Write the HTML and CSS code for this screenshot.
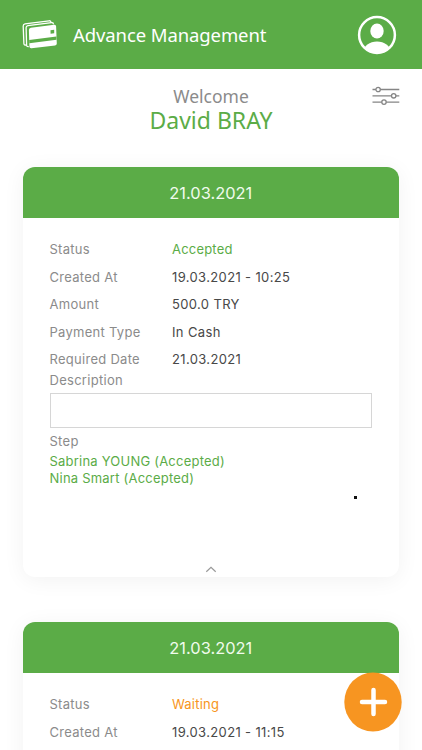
FILE: index.html
```html
<!DOCTYPE html>
<html lang="en">
<head>
<meta charset="utf-8">
<title>Advance Management</title>
<link rel="stylesheet" href="styles.css">
</head>
<body>
<div class="app">
  <header class="topbar">
    <svg class="cards-icon" width="36" height="30" viewBox="0 0 36 30">
      <g fill="none" stroke="#fff" stroke-width="1.3" stroke-linecap="round" stroke-linejoin="round">
        <path d="M3.8 25.200 2.900 25Q2 24.800 1.900 23.800L1.200 6.100Q1.100 4.200 3 3.900L27 .8Q28.700 .6 28.800 1.900"/>
        <path d="M6.200 26.700 5.500 26.500Q4.700 26.200 4.600 25.200L4.100 7.800Q4 6 5.900 5.700L29.500 2.700Q31.200 2.500 31.300 3.800"/>
      </g>
      <path fill="#fff" d="M8.900 7.700 32.200 4.700Q34 4.500 34.100 6.300L34.800 23.500Q34.900 25.200 33.100 25.400L9.500 28.200Q7.500 28.400 7.400 26.600L6.900 10Q6.900 8 8.900 7.700Z"/>
      <path fill="#5bac47" d="M7.200 19.900 34.500 16.500V19.800L7.300 23.200ZM28.500 10.200 32.200 9.700V13.300L28.600 13.700Z"/>
    </svg>
    <h1 class="title">Advance Management</h1>
    <svg class="avatar" width="40" height="40" viewBox="0 0 40 40">
      <defs><clipPath id="ring"><circle cx="20" cy="20" r="18"/></clipPath></defs>
      <g fill="#fff" clip-path="url(#ring)">
        <ellipse cx="20" cy="16" rx="6.700" ry="7.500"/>
        <ellipse cx="20" cy="36.500" rx="13.500" ry="10"/>
      </g>
      <circle cx="20" cy="20" r="17.900" fill="none" stroke="#fff" stroke-width="2.500"/>
    </svg>
  </header>

  <section class="welcome">
    <p class="greeting">Welcome</p>
    <p class="user">David BRAY</p>
    <svg class="filter" width="28" height="20" viewBox="0 0 28 20" fill="none" stroke="#858585" stroke-width="1.300">
      <path d="M.5 3.500H3.900M8.300 3.500H27.300M.5 9.800H19.500M23.900 9.800H27.300M.5 16.100H9.800M14.200 16.100H27.300"/>
      <circle cx="6.100" cy="3.500" r="2.200"/><circle cx="21.700" cy="9.800" r="2.200"/><circle cx="12" cy="16.100" r="2.200"/>
    </svg>
  </section>

  <main class="list">
    <article class="card">
      <h2 class="card-head">21.03.2021</h2>
      <div class="card-body">
        <dl class="rows">
          <dt>Status</dt><dd class="accepted">Accepted</dd>
          <dt>Created At</dt><dd>19.03.2021 - 10:25</dd>
          <dt>Amount</dt><dd>500.0 TRY</dd>
          <dt>Payment Type</dt><dd>In Cash</dd>
          <dt>Required Date</dt><dd>21.03.2021</dd>
        </dl>
        <p class="label">Description</p>
        <div class="description"></div>
        <p class="label step">Step</p>
        <p class="approver">Sabrina YOUNG (Accepted)</p>
        <p class="approver">Nina Smart (Accepted)</p>
        <div class="dot"></div>
        <svg class="chevron" width="12" height="7" viewBox="0 0 12 7"><path d="M1.300 5.700 6 1.300 10.700 5.700" fill="none" stroke="#999" stroke-width="1.200"/></svg>
      </div>
    </article>
    <article class="card">
      <h2 class="card-head">21.03.2021</h2>
      <div class="card-body">
        <dl class="rows">
          <dt>Status</dt><dd class="waiting">Waiting</dd>
          <dt>Created At</dt><dd>19.03.2021 - 11:15</dd>
        </dl>
      </div>
    </article>
  </main>

  <button class="fab" aria-label="Add">
    <svg width="58" height="60" viewBox="0 0 58 60"><ellipse cx="29" cy="30" rx="28.700" ry="29.600" fill="#f79521"/><path d="M18 30H41M29.500 18V42" stroke="#fff" stroke-width="4.500" stroke-linecap="round"/></svg>
  </button>
</div>
</body>
</html>
```
FILE: styles.css
```css
* { box-sizing: border-box; margin: 0; padding: 0; }
html, body { height: 100%; overflow: hidden; }
body { background: #fff; font-family: Inter, "Liberation Sans", sans-serif; }
.app { position: relative; height: 750px; overflow: hidden; }

.topbar { display: flex; align-items: center; height: 69px; padding: 0 25px 0 22px; background: #5bac47; }
.cards-icon { flex: none; }
.title { margin-left: 15px; flex: 1; color: #fff; font: 400 18.5px/28px "Noto Sans", sans-serif; letter-spacing: -0.1px; white-space: nowrap; }
.avatar { flex: none; }

.welcome { position: relative; height: 98px; padding-top: 15px; text-align: center; font-family: "Noto Sans", sans-serif; }
.greeting { color: #8b8b8b; font-size: 17.5px; line-height: 24px; }
.user { color: #5bac47; font-size: 23px; line-height: 25px; }
.filter { position: absolute; right: 22px; top: 17px; }

.list { display: flex; flex-direction: column; gap: 45px; padding: 0 23px 0 22.5px; }
.card { border-radius: 12px; background: #fff; box-shadow: 0 3px 22px rgba(0, 0, 0, 0.055); height: 410px; flex: none; }
.card-head { height: 51px; border-radius: 12px 12px 0 0; background: #5bac47; color: #f0fbed; font-size: 16.4px; font-weight: 400; line-height: 52px; text-align: center; }
.card-body { display: flex; flex-direction: column; padding: 18px 27px 0; font-size: 13px; letter-spacing: 0.28px; }
.rows { display: grid; grid-template-columns: 122.500px 1fr; grid-auto-rows: 27.500px; line-height: 27.500px; }
dt, .label { color: #8b8b8b; }
dd { color: #484848; letter-spacing: 0.36px; }
.rows .accepted, .rows .waiting { letter-spacing: 0.2px; }
.rows .accepted, .approver { color: #5bac47; }
.rows .waiting { color: #f79521; }
.label { line-height: 16px; margin-top: -2px; }
.description { height: 35px; margin-top: 5px; border: 1px solid #d6d6d6; }
.step { margin: 5px 0 4.500px; }
.approver { line-height: 16.500px; letter-spacing: 0.22px; }
.dot { width: 3px; height: 3px; margin: 10px 15px 0 auto; background: #111; }
.chevron { align-self: center; margin-top: 67px; }
.fab { position: absolute; left: 344px; top: 671.500px; width: 58px; height: 60px; border: 0; background: none; }
.fab svg { display: block; }
```
